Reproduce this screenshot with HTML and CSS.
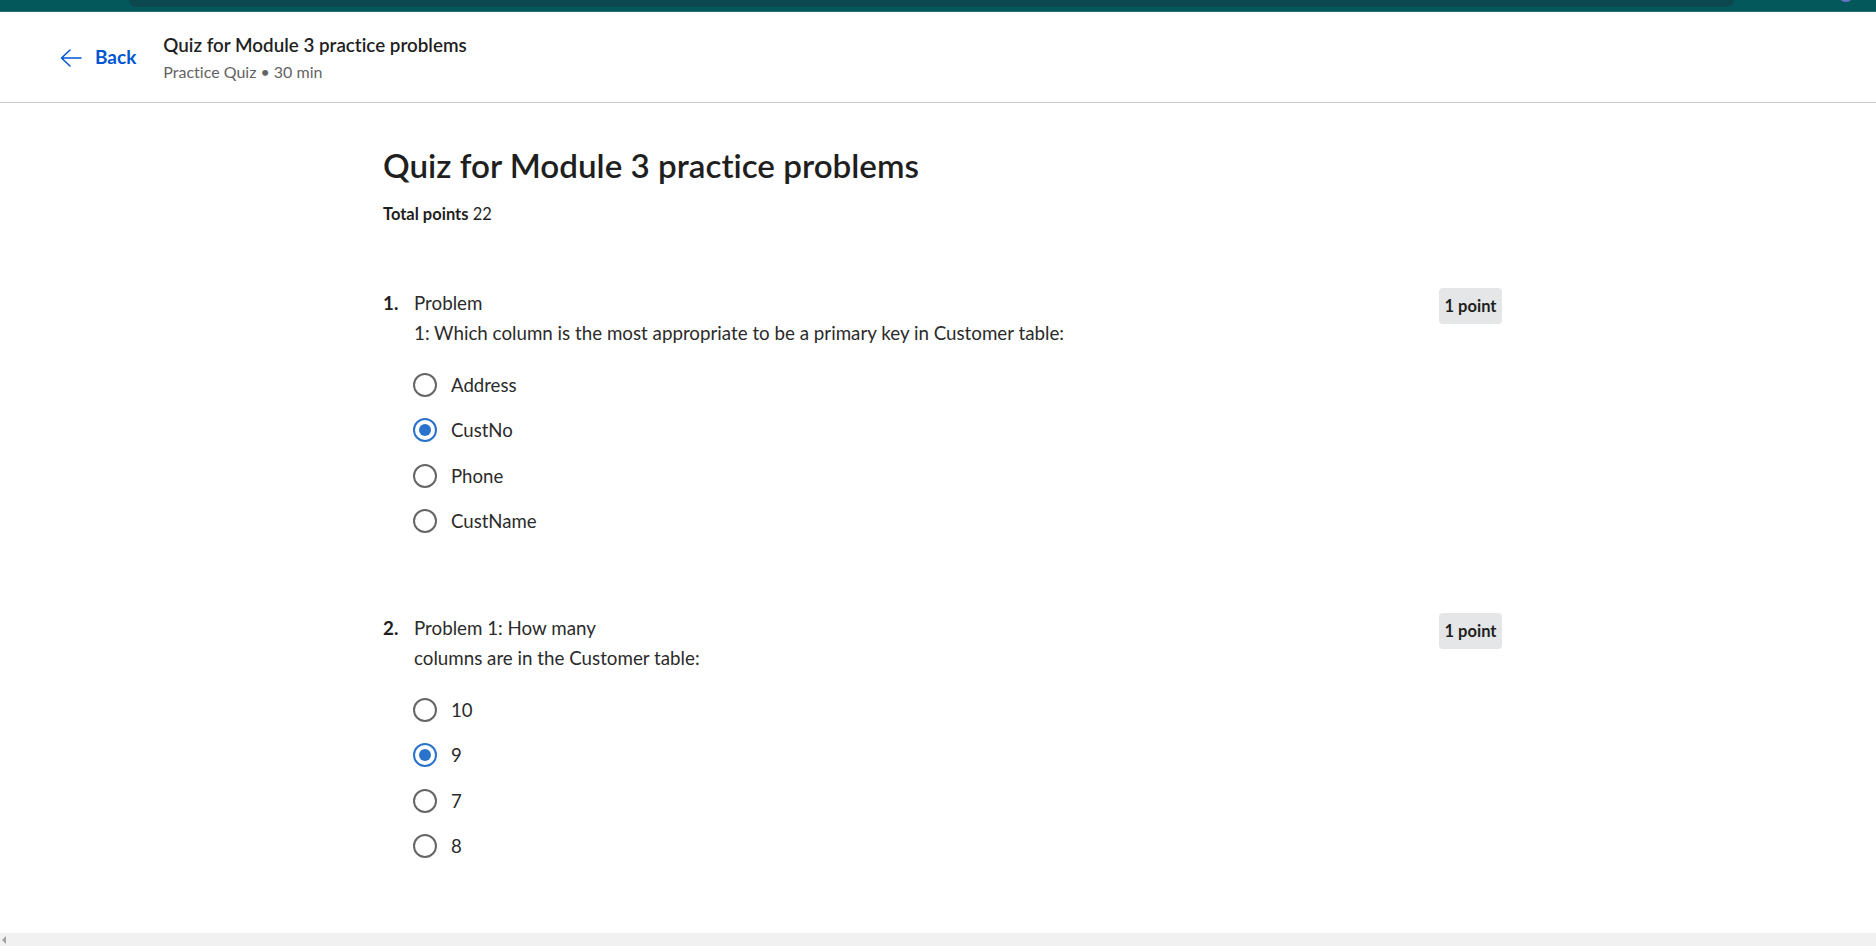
FILE: index.html
```html
<!DOCTYPE html>
<html lang="en">
<head>
<meta charset="utf-8">
<title>Quiz for Module 3 practice problems</title>
<link rel="stylesheet" href="styles.css">
</head>
<body>
<div class="topbar"><div class="topbar-inner"></div><div class="topbar-avatar"></div></div>
<header class="header">
  <a class="back" href="#">
    <svg class="back-icon" width="22" height="18" viewBox="0 0 22 18" aria-hidden="true">
      <path d="M10 1 L1.5 9 L10 17 M1.5 9 H21" fill="none" stroke="#0056d2" stroke-width="1.5" stroke-linecap="round" stroke-linejoin="round"/>
    </svg>
    <span>Back</span>
  </a>
  <div class="header-title">
    <div class="header-name">Quiz for Module 3 practice problems</div>
    <div class="header-sub">Practice Quiz • 30 min</div>
  </div>
</header>
<main class="content">
  <h1 class="page-title">Quiz for Module 3 practice problems</h1>
  <div class="total"><b>Total points</b> 22</div>

  <section class="question q1">
    <div class="q-num">1.</div>
    <div class="q-body">
      <div class="q-text">Problem<br>1: Which column is the most appropriate to be a primary key in Customer table:</div>
      <div class="options">
        <label class="option"><span class="radio"></span><span class="opt-label">Address</span></label>
        <label class="option"><span class="radio checked"></span><span class="opt-label">CustNo</span></label>
        <label class="option"><span class="radio"></span><span class="opt-label">Phone</span></label>
        <label class="option"><span class="radio"></span><span class="opt-label">CustName</span></label>
      </div>
    </div>
    <div class="badge">1 point</div>
  </section>

  <section class="question q2">
    <div class="q-num">2.</div>
    <div class="q-body">
      <div class="q-text">Problem 1: How many<br>columns are in the Customer table:</div>
      <div class="options">
        <label class="option"><span class="radio"></span><span class="opt-label">10</span></label>
        <label class="option"><span class="radio checked"></span><span class="opt-label">9</span></label>
        <label class="option"><span class="radio"></span><span class="opt-label">7</span></label>
        <label class="option"><span class="radio"></span><span class="opt-label">8</span></label>
      </div>
    </div>
    <div class="badge">1 point</div>
  </section>
</main>
<div class="hscroll"><span class="hscroll-arrow"></span></div>
</body>
</html>
```
FILE: styles.css
```css
html, body {
  margin: 0;
  padding: 0;
  background: #ffffff;
  overflow: hidden;
}
body {
  font-family: "Lato", "Liberation Sans", sans-serif;
  font-variant-ligatures: none;
  color: #1f1f1f;
}

.topbar {
  height: 11px;
  background: #03585c;
  border-bottom: 1px solid #2e6e71;
  display: flex;
  position: relative;
}
.topbar-inner {
  margin-left: 129px;
  width: 1605px;
  height: 7px;
  background: #0d4850;
  border-radius: 0 0 12px 12px;
}
.topbar-avatar {
  position: absolute;
  right: 22px;
  top: -14px;
  width: 16px;
  height: 16px;
  border-radius: 50%;
  background: #6d72c9;
}

.header {
  height: 90px;
  border-bottom: 1px solid #c8c8c8;
  display: flex;
  align-items: center;
  padding-left: 60px;
}
.back {
  display: flex;
  align-items: center;
  gap: 13px;
  color: #0056d2;
  text-decoration: none;
  font-weight: 700;
  font-size: 19px;
  line-height: 24px;
}
.back-icon {
  display: block;
  margin-top: 1px;
}
.header-title {
  margin-left: 27px;
  display: flex;
  flex-direction: column;
  margin-top: 2px;
}
.header-name {
  font-size: 18.8px;
  font-weight: 600;
  line-height: 26px;
  color: #1f1f1f;
}
.header-sub {
  font-size: 16px;
  line-height: 26px;
  margin-top: 1px;
  color: #636363;
}

.content {
  margin-left: 383px;
  width: 1119px;
}
.page-title {
  margin: 40px 0 0;
  font-size: 33.2px;
  font-weight: 600;
  line-height: 44px;
  color: #1f1f1f;
}
.total {
  margin-top: 15px;
  font-size: 16.5px;
  line-height: 24px;
}
.total b {
  font-weight: 700;
}

.question {
  display: flex;
  align-items: flex-start;
}
.q1 {
  margin-top: 62px;
}
.q2 {
  margin-top: 69px;
}
.q-num {
  width: 31px;
  font-size: 18.75px;
  font-weight: 700;
  line-height: 30px;
}
.q-body {
  flex: 1;
}
.q-text {
  font-size: 18.75px;
  line-height: 30px;
  color: #2b2b2b;
}
.options {
  margin-top: 14px;
  display: flex;
  flex-direction: column;
}
.option {
  height: 45.5px;
  display: flex;
  align-items: center;
  gap: 14px;
  margin-left: -1px;
}
.radio {
  width: 24px;
  height: 24px;
  box-sizing: border-box;
  border: 2.5px solid #666666;
  border-radius: 50%;
  display: flex;
  align-items: center;
  justify-content: center;
}
.radio.checked {
  border-color: #2a73cc;
}
.radio.checked::after {
  content: "";
  width: 12px;
  height: 12px;
  border-radius: 50%;
  background: #2a73cc;
}
.opt-label {
  font-size: 18.6px;
  line-height: 24px;
  color: #2b2b2b;
}
.badge {
  width: 63px;
  height: 36px;
  border-radius: 4px;
  background: #e5e6e8;
  display: flex;
  align-items: center;
  justify-content: center;
  font-size: 16.5px;
  font-weight: 700;
  color: #1f1f1f;
}

.hscroll {
  position: fixed;
  left: 0;
  right: 0;
  bottom: 0;
  height: 13px;
  background: #f1f1f1;
}
.hscroll-arrow {
  position: absolute;
  left: 2px;
  top: 3px;
  width: 0;
  height: 0;
  border-top: 4px solid transparent;
  border-bottom: 4px solid transparent;
  border-right: 4px solid #a3a3a3;
}
```
